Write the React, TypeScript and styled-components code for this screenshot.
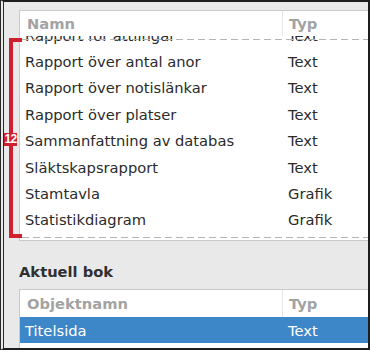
import React from 'react';
import styled, { createGlobalStyle } from 'styled-components';

const GlobalStyle = createGlobalStyle`
    html, body {
        margin: 0;
        padding: 0;
        background: #ffffff;
    }
    body {
        font-family: "DejaVu Sans", "Liberation Sans", sans-serif;
    }
`;

const ROW_HEIGHT = 26.4;
const FONT = '14.7px';

const Frame = styled.div`
    position: relative;
    width: 370px;
    height: 350px;
    box-sizing: border-box;
    border: 2px solid #1e1e1e;
    border-left: 4px double #2a2a2a;
    background: #e9e9e9;
    padding: 8px 0 0 15px;
    overflow: hidden;
`;

const ListBox = styled.div<{ height?: number }>`
    background: #ffffff;
    border: 1px solid #c9c9c9;
    border-right: none;
    height: ${props => props.height ? `${props.height}px` : 'auto'};
    box-sizing: border-box;
    display: flex;
    flex-direction: column;
`;

const Columns = styled.div`
    display: grid;
    grid-template-columns: 263px 1fr;
`;

const HeaderRow = styled(Columns)<{ height: number }>`
    height: ${props => props.height}px;
    flex-shrink: 0;
    background: #ffffff;
`;

const HeaderCell = styled.div<{ first?: boolean }>`
    display: flex;
    align-items: center;
    padding-left: ${props => props.first ? '7px' : '6px'};
    font-size: ${FONT};
    font-weight: bold;
    color: #a3a3a3;
    border-right: ${props => props.first ? '1px solid #e6e6e6' : 'none'};
`;

const Viewport = styled.div`
    flex: 1;
    overflow: hidden;
`;

const Rows = styled.div<{ offset: number }>`
    margin-top: ${props => -props.offset}px;
`;

const Row = styled(Columns)<{ selected?: boolean }>`
    height: ${ROW_HEIGHT}px;
    background: ${props => props.selected ? '#3d86c7' : 'transparent'};
    color: ${props => props.selected ? '#ffffff' : '#2b2b2b'};
`;

const Cell = styled.div`
    display: flex;
    align-items: center;
    padding-left: 5px;
    font-size: ${FONT};
    white-space: nowrap;
`;

const SectionTitle = styled.div`
    margin: 21px 0 7px 0;
    height: 20px;
    line-height: 20px;
    font-size: ${FONT};
    font-weight: bold;
    color: #303030;
`;

/* annotation overlays */
const Dashed = styled.div<{ top: number }>`
    position: absolute;
    top: ${props => props.top}px;
    left: 18px;
    right: 0;
    height: 1px;
    background: repeating-linear-gradient(to right, #b4b4b4 0 7px, transparent 7px 11px);
    z-index: 2;
`;

const BracketBar = styled.div`
    position: absolute;
    left: 5px;
    top: 36px;
    width: 4px;
    height: 200px;
    background: #d0202f;
    z-index: 3;
`;

const BracketArm = styled.div<{ top: number }>`
    position: absolute;
    left: 5px;
    top: ${props => props.top}px;
    width: 13px;
    height: 4px;
    background: #d0202f;
    z-index: 3;
`;

const Badge = styled.div`
    position: absolute;
    left: 0;
    top: 131px;
    width: 13px;
    height: 13px;
    background: #d0202f;
    color: #ffffff;
    font-family: "Liberation Sans", Arial, sans-serif;
    font-size: 12px;
    font-weight: bold;
    line-height: 13px;
    text-align: center;
    letter-spacing: -0.6px;
    z-index: 4;
`;

const reports = [
    ['Rapport för ättlingar', 'Text'],
    ['Rapport över antal anor', 'Text'],
    ['Rapport över notislänkar', 'Text'],
    ['Rapport över platser', 'Text'],
    ['Sammanfattning av databas', 'Text'],
    ['Släktskapsrapport', 'Text'],
    ['Stamtavla', 'Grafik'],
    ['Statistikdiagram', 'Grafik'],
];

const App: React.FC = () => {
    return (
        <>
            <GlobalStyle />
            <Frame>
                <ListBox height={231}>
                    <HeaderRow height={25}>
                        <HeaderCell first>Namn</HeaderCell>
                        <HeaderCell>Typ</HeaderCell>
                    </HeaderRow>
                    <Viewport>
                        <Rows offset={14}>
                            {reports.map(([name, type]) => (
                                <Row key={name}>
                                    <Cell>{name}</Cell>
                                    <Cell>{type}</Cell>
                                </Row>
                            ))}
                        </Rows>
                    </Viewport>
                </ListBox>

                <SectionTitle>Aktuell bok</SectionTitle>

                <ListBox>
                    <HeaderRow height={27}>
                        <HeaderCell first>Objektnamn</HeaderCell>
                        <HeaderCell>Typ</HeaderCell>
                    </HeaderRow>
                    <Row selected>
                        <Cell>Titelsida</Cell>
                        <Cell>Text</Cell>
                    </Row>
                    <Row>
                        <Cell />
                        <Cell />
                    </Row>
                </ListBox>

                <Dashed top={37} />
                <Dashed top={235} />
                <BracketBar />
                <BracketArm top={36} />
                <BracketArm top={232} />
                <Badge>12</Badge>
            </Frame>
        </>
    );
};

export default App;
